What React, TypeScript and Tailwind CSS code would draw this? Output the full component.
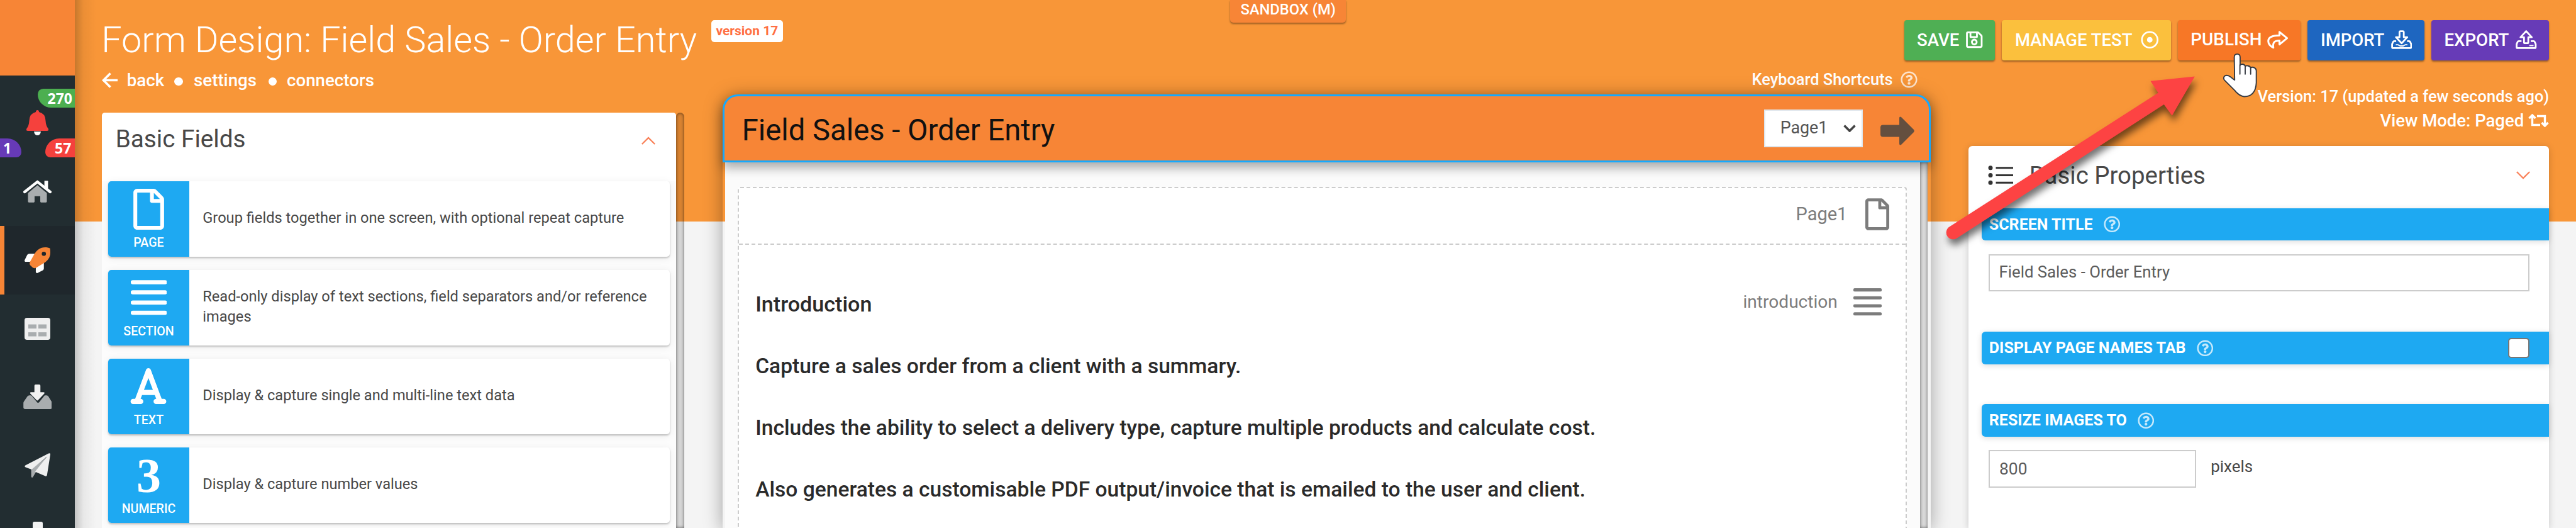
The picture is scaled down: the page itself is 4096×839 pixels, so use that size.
import type { ReactNode } from 'react';
import { FaRegDotCircle, FaRegFile, FaRegQuestionCircle, FaRegSave } from 'react-icons/fa';
import { FaFont } from 'react-icons/fa6';

function HomeIcon() {
  return (
    <svg viewBox="0 0 576 456" className="h-[36px] w-[45px]">
      <path fill="#a9adaf" d="M288 104 480 262V436q0 18-18 18H362q-16 0-16-18V326H230V436q0 18-16 18H114q-18 0-18-18V262Z" />
      <path fill="#fff" d="M430 14h62q12 0 12 12v170l-74-60Z" />
      <path d="M28 240 288 34 548 240" fill="none" stroke="#fff" strokeWidth="56" strokeLinecap="round" strokeLinejoin="round" />
    </svg>
  );
}

function RocketIcon() {
  return (
    <svg viewBox="0 0 512 512" className="h-[41px] w-[41px]">
      <path fill="#fff" d="M199 128H95c-16 0-36 12-43 26L3 253c-8 16 3 35 21 35h104l96 96v104c0 18 19 29 35 21l99-49c15-7 26-26 26-43V313Z" />
      <path fill="#f78536" d="M505 19C461 0 435 0 410 0 307 0 245 55 199 128l-88 156c-16 30-12 54 4 72l45 45c20 18 44 18 72 4l152-92C457 266 512 204 512 102c0-26 0-51-7-83Z" />
      <circle cx="384" cy="128" r="42" fill="#1f272c" />
    </svg>
  );
}

function TableIcon() {
  return (
    <svg viewBox="0 0 41 35" className="h-[35px] w-[41px]">
      <rect width="41" height="35" rx="4" fill="#efefef" />
      <path fill="#a9adaf" d="M6 10.500h13v6.500H6zM22 10.500h13v6.500H22zM6 23h13v6.500H6zM22 23h13v6.500H22z" />
    </svg>
  );
}

function InboxInIcon() {
  return (
    <svg viewBox="0 0 147 127" className="h-[39px] w-[45.600px]">
      <path fill="#a9adaf" d="M30 56h12l30 38h8l30-38h10q6 0 9 5l16 26q3 4 3 9v22q0 9-9 9H9q-9 0-9-9V96q0-5 3-9l18-26q4-5 9-5Z" />
      <path d="M57 6q0-6 6-6h19q6 0 6 6v34h16q8 0 4 7L76 81q-4 4-8 0L36 47q-4-7 4-7h17Z" fill="#f2f2f2" stroke="#222d31" strokeWidth="5" paintOrder="stroke" />
    </svg>
  );
}

function PlaneIcon() {
  return (
    <svg viewBox="0 0 133 127" className="h-[39px] w-[41.200px]">
      <path fill="#a9adaf" d="M34 82 112 24 55 103 42 125q-8 4-8-5Z" />
      <path fill="#efefef" d="M124 2q10-4 9 5L116 114q-2 8-9 5L54 96 116 18 36 85 5 73q-9-5 0-10Z" />
    </svg>
  );
}

function DeviceIcon() {
  return (
    <svg viewBox="0 0 16 40" className="h-[40px] w-[16px]">
      <path fill="#f2f2f2" d="M2.500 0h11Q16 0 16 3v37H0V3q0-3 2.500-3Z" />
    </svg>
  );
}

function SideItem({ children, active }: { children: ReactNode; active?: boolean }) {
  return (
    <div
      className={
        active
          ? 'flex h-[108.900px] shrink-0 items-center justify-center border-l-[7px] border-[#f78536] bg-[#1f272c] pr-[7px]'
          : 'flex h-[108.900px] shrink-0 items-center justify-center'
      }
    >
      {children}
    </div>
  );
}

function Sidebar() {
  return (
    <aside className="relative z-10 flex w-[119px] shrink-0 flex-col overflow-hidden bg-[#222d31]">
      <div className="h-[119.500px] shrink-0 bg-[#f78536]" />
      <div className="relative flex h-[130.300px] shrink-0 justify-center pt-[55px] font-['Open_Sans',sans-serif] text-[23px] leading-[30px] font-bold text-white">
        <svg viewBox="0 0 35 40" className="h-[40px] w-[35px]">
          <path fill="#fff" d="M12 34h11q-1 6-5.500 6T12 34Z" />
          <path fill="#f5413d" d="M17.500 0q2.500 0 2.500 3 10 2 10.500 14 .500 8 4 12 2 4-2 4h-30q-4 0-2-4 3.500-4 4-12Q5 5 15 3q0-3 2.500-3Z" />
        </svg>
        <span className="absolute top-[21px] right-0 h-[30px] w-[59.500px] rounded-tl-[10px] rounded-bl-[24px] bg-[#4caf50] pl-[16px]">270</span>
        <span className="absolute bottom-0 left-0 h-[30px] w-[34px] rounded-tr-[22px] rounded-br-[8px] bg-[#673ab7] pl-[5px]">1</span>
        <span className="absolute right-0 bottom-0 h-[30px] w-[47px] rounded-tl-[22px] rounded-bl-[8px] bg-[#f5413d] pl-[15px]">57</span>
      </div>
      <SideItem><HomeIcon /></SideItem>
      <SideItem active><RocketIcon /></SideItem>
      <SideItem><TableIcon /></SideItem>
      <SideItem><InboxInIcon /></SideItem>
      <SideItem><PlaneIcon /></SideItem>
      <SideItem><DeviceIcon /></SideItem>
    </aside>
  );
}

function SectionLines({ className }: { className: string }) {
  return (
    <svg viewBox="0 0 57.500 55.500" preserveAspectRatio="none" className={className}>
      <path d="M3 3.400h51.500M3 19.500h51.500M3 35.700h51.500M3 52h51.500" stroke="currentColor" strokeWidth="6.500" strokeLinecap="round" />
    </svg>
  );
}

function FieldRow({ label, icon, children }: { label: string; icon: ReactNode; children: ReactNode }) {
  return (
    <div className="flex h-[119.700px] shrink-0 overflow-hidden rounded-[5px] bg-white shadow-[0_2px_3px_rgba(0,0,0,0.220),0_2px_14px_rgba(0,0,0,0.070)]">
      <div className="flex w-[128.600px] shrink-0 flex-col items-center bg-[#1ea9f2] text-white">
        <div className="flex h-[88px] items-center justify-center">{icon}</div>
        <div className="text-[19.600px] leading-[20px] font-medium">{label}</div>
      </div>
      <div className="flex flex-1 items-center pr-[18px] pb-[3px] pl-[21.500px] text-[23.630px] leading-[32.600px] text-[#484848]">
        <div>{children}</div>
      </div>
    </div>
  );
}

function LeftColumn() {
  return (
    <section className="flex w-[926px] shrink-0 flex-col">
      <div className="flex h-[112px] shrink-0 pt-[16px]">
        <h1 className="-ml-px flex w-[969.600px] shrink-0 items-center text-[57.600px] leading-none font-light whitespace-nowrap text-white">
          Form Design: Field Sales - Order Entry
        </h1>
        <span className="mt-[16px] flex h-[34.500px] shrink-0 items-center rounded-[5px] bg-white px-[7.700px] text-[21px] leading-none font-bold whitespace-nowrap text-[#ff7043]">
          version 17
        </span>
      </div>
      <nav className="flex h-[31px] shrink-0 items-center text-[27.700px] leading-none font-medium text-white">
        <svg viewBox="0 0 25 25" className="mr-[14.500px] h-[25px] w-[25px]" fill="none" stroke="#fff" strokeWidth="3.600">
          <path d="M25 12.500H3M13.500 1.500 2.500 12.500l11 11" />
        </svg>
        <a>back</a>
        <i className="mt-[3px] mr-[17.500px] ml-[16px] h-[13px] w-[13.500px] rounded-full bg-white" />
        <a>settings</a>
        <i className="mt-[3px] mr-[16px] ml-[18.500px] h-[13px] w-[13.500px] rounded-full bg-white" />
        <a>connectors</a>
      </nav>
      <div className="mt-[36.200px] flex flex-1">
        <div className="flex w-[912.700px] flex-col rounded-t-[5px] bg-[#fcfcfc]">
          <div className="flex h-[109px] shrink-0 items-center justify-between rounded-t-[5px] bg-white pr-[32px] pb-[24px] pl-[21.500px]">
            <h2 className="text-[38.700px] leading-none text-[#484848]">Basic Fields</h2>
            <svg viewBox="0 0 24 14" className="mt-[4px] h-[13px] w-[24px]" fill="none" stroke="#f9825a" strokeWidth="2.400">
              <path d="m1 13 11-11 11 11" />
            </svg>
          </div>
          <div className="flex flex-col gap-[21.200px] px-[10px]">
            <FieldRow label="PAGE" icon={<FaRegFile className="h-[65px] w-[49px]" />}>
              Group fields together in one screen, with optional repeat capture
            </FieldRow>
            <FieldRow label="SECTION" icon={<SectionLines className="h-[55.500px] w-[57.500px]" />}>
              Read-only display of text sections, field separators and/or reference
              <br />
              images
            </FieldRow>
            <FieldRow label="TEXT" icon={<FaFont className="h-[65px] w-[58px]" />}>
              Display &amp; capture single and multi-line text data
            </FieldRow>
            <FieldRow label="NUMERIC" icon={<b className="pt-[2px] font-['Liberation_Serif',serif] text-[78px] leading-none">3</b>}>
              Display &amp; capture number values
            </FieldRow>
          </div>
        </div>
        <div className="w-[13.300px] rounded-t-[7px] bg-black/12 shadow-[inset_0_0_5px_rgba(0,0,0,0.600)]" />
      </div>
    </section>
  );
}

function CenterColumn() {
  return (
    <section className="flex w-[1921px] shrink-0 flex-col pt-[104px] text-[#222]">
      <div className="flex h-[45.800px] shrink-0 items-center justify-end gap-[12px] pr-[21px] text-[25.400px] leading-none font-medium text-white">
        <span>Keyboard Shortcuts</span>
        <FaRegQuestionCircle className="h-[27px] w-[27px] opacity-75" />
      </div>
      <div className="relative flex flex-1 flex-col rounded-t-[24px] shadow-[0_4px_30px_rgba(0,0,0,0.350)]">
        <header className="relative z-10 flex h-[108.700px] shrink-0 items-center rounded-t-[24px] border-[3.700px] border-[#14a9ff] bg-[#f78536] pr-[23px] pl-[28px] shadow-[0_8px_18px_rgba(0,0,0,0.350)]">
          <h2 className="flex-1 pt-[7px] text-[47.200px] leading-none text-[#111]">Field Sales - Order Entry</h2>
          <div className="mr-[27.500px] flex h-[59.500px] w-[157.500px] items-center justify-between border-2 border-[#dfe6ec] bg-white pr-[9px] pl-[24px]">
            <span className="pb-[2px] text-[26.800px] leading-none text-[#555]">Page1</span>
            <svg viewBox="0 0 20 12" className="h-[12px] w-[20px]" fill="none" stroke="#444" strokeWidth="3.600">
              <path d="m1.500 1.500 8.500 8.500 8.500-8.500" />
            </svg>
          </div>
          <svg viewBox="0 0 54 46" className="mt-[8px] h-[46px] w-[54px]" fill="#644f3f">
            <path d="M4 13.500h26V3q0-4 3.500-1.500L53 21q1.500 2 0 4L33.500 44.500Q30 47 30 43V32.500H4q-4 0-4-4v-11q0-4 4-4Z" />
          </svg>
        </header>
        <div className="flex flex-1 pr-[4.300px] pl-[4px]">
          <div className="flex flex-1 flex-col bg-[#fbfbfb] pt-[38.500px] pr-[21px] pl-[20.500px]">
            <div className="flex flex-1 flex-col rounded-t-[4px] border-x-2 border-t-2 border-dashed border-[#ccc] bg-white">
              <div className="flex h-[90px] shrink-0 items-center justify-end gap-[29px] border-b-2 border-dashed border-[#ccc] pr-[25.500px] pb-[5px] text-[#7c7c7c]">
                <span className="text-[29px] leading-none">Page1</span>
                <FaRegFile className="h-[51px] w-[38px]" />
              </div>
              <div className="flex justify-between pt-[46.500px] pr-[37.500px] pl-[26px]">
                <div className="text-[33.600px] leading-[97.900px] font-medium whitespace-nowrap text-[#2a2a2a]">
                  <p className="text-[34.100px]">Introduction</p>
                  <p>Capture a sales order from a client with a summary.</p>
                  <p>Includes the ability to select a delivery type, capture multiple products and calculate cost.</p>
                  <p>Also generates a customisable PDF output/invoice that is emailed to the user and client.</p>
                </div>
                <div className="flex h-[89px] items-center gap-[25.500px] text-[#7c7c7c]">
                  <span className="text-[28.100px] leading-none">introduction</span>
                  <SectionLines className="h-[43.500px] w-[45px]" />
                </div>
              </div>
            </div>
          </div>
          <div className="w-[12.500px] bg-[#d9d9d9] shadow-[inset_0_0_5px_rgba(0,0,0,0.550)]" />
        </div>
      </div>
    </section>
  );
}

function ActionButton({ label, className, icon }: { label: string; className: string; icon: ReactNode }) {
  return (
    <button
      className={`flex h-[64.200px] shrink-0 items-center justify-between rounded-[4px] pr-[19.700px] pb-[2px] pl-[20.500px] leading-none font-medium text-white shadow-[0_2px_3px_rgba(0,0,0,0.400)] ${className}`}
    >
      <span>{label}</span>
      {icon}
    </button>
  );
}

function PropertyBar({ label, children }: { label: string; children?: ReactNode }) {
  return (
    <div className="ml-[21.600px] flex h-[51.400px] shrink-0 items-center rounded-l-[6px] bg-[#1ea9f2] pl-[11.500px] text-white shadow-[0_2px_10px_rgba(0,0,0,0.150)]">
      <span className="text-[25.050px] leading-none font-bold">{label}</span>
      <FaRegQuestionCircle className="ml-[17px] h-[26.500px] w-[26.500px] opacity-75" />
      {children}
    </div>
  );
}

function RightColumn() {
  return (
    <section className="flex w-[923.500px] shrink-0 flex-col pt-[32.300px]">
      <div className="flex shrink-0 justify-end gap-[11px]">
        <ActionButton label="SAVE" className="w-[144.900px] bg-[#4faf54] text-[27.600px]" icon={<FaRegSave className="h-[30px] w-[26.500px]" />} />
        <ActionButton label="MANAGE TEST" className="w-[268.300px] bg-[#fbc03d] text-[27.500px]" icon={<FaRegDotCircle className="h-[28.500px] w-[28.500px]" />} />
        <ActionButton
          label="PUBLISH"
          className="w-[195.700px] bg-[#f77726] text-[27.900px]"
          icon={
            <svg viewBox="0 0 512 440" className="h-[28.600px] w-[33.300px]" fill="none" stroke="#fff" strokeWidth="46" strokeLinejoin="round">
              <path d="M300 28 486 180 300 332V238C180 238 128 280 150 412 78 376 26 320 26 250c0-102 110-138 274-140Z" />
            </svg>
          }
        />
        <ActionButton
          label="IMPORT"
          className="w-[185.600px] bg-[#1e66c0] text-[27.500px]"
          icon={
            <svg viewBox="0 0 108 97" className="h-[30px] w-[33.500px]" fill="none" stroke="#fff" strokeWidth="9" strokeLinejoin="round">
              <path d="M43 10q0-5 5-5h12q5 0 5 5v26h18L54 67 25 36h18Z" />
              <path d="M26 56H16q-4 0-6 4l-5 11v16q0 5 5 5h88q5 0 5-5V71l-5-11q-2-4-6-4H82" />
              <path d="M24 75h12l10 6h16l10-6h12" strokeWidth="6" />
            </svg>
          }
        />
        <ActionButton
          label="EXPORT"
          className="w-[187.200px] bg-[#673bb7] text-[27.600px]"
          icon={
            <svg viewBox="0 0 108 97" className="h-[30px] w-[33.500px]" fill="none" stroke="#fff" strokeWidth="9" strokeLinejoin="round">
              <path d="M43 62q0 5 5 5h12q5 0 5-5V36h18L54 5 25 36h18Z" />
              <path d="M30 56H16q-4 0-6 4l-5 11v16q0 5 5 5h88q5 0 5-5V71l-5-11q-2-4-6-4H78" />
              <path d="M70 79h22" strokeWidth="6" />
            </svg>
          }
        />
      </div>
      <div className="mt-[37.700px] flex h-[38.200px] shrink-0 items-center justify-end text-[25.400px] leading-none font-medium text-white">
        Version: 17 (updated a few seconds ago)
      </div>
      <div className="flex h-[38px] shrink-0 items-center justify-end gap-[7px] text-[27.500px] leading-none font-medium text-white">
        View Mode: Paged
        <svg viewBox="0 0 33 21" className="h-[21px] w-[33px]" fill="none" stroke="#fff" strokeWidth="3.400">
          <path d="M6.500 2v15.500H19M1.500 7 6.500 2l5 5M26.500 19V3.500H14M21.500 14l5 5 5-5" />
        </svg>
      </div>
      <div className="mt-[21.700px] flex flex-1 flex-col rounded-t-[6px] bg-white shadow-[0_2px_12px_rgba(0,0,0,0.180)]">
        <div className="flex h-[98.700px] shrink-0 items-center pr-[29px] pb-[5px] pl-[31px]">
          <svg viewBox="0 0 40 31" className="h-[31px] w-[40px]" fill="#333">
            <circle cx="4" cy="3.800" r="3.500" />
            <circle cx="4" cy="15.500" r="3.500" />
            <circle cx="4" cy="27.200" r="3.500" />
            <path d="M12.500 2.300H40v3H12.500zM12.500 14H40v3H12.500zM12.500 25.700H40v3H12.500z" />
          </svg>
          <h2 className="ml-[26px] flex-1 text-[38.400px] leading-none text-[#484848]">Basic Properties</h2>
          <svg viewBox="0 0 24 14" className="h-[13px] w-[24px]" fill="none" stroke="#f9825a" strokeWidth="2.400">
            <path d="m1 1 11 11L23 1" />
          </svg>
        </div>
        <PropertyBar label="SCREEN TITLE" />
        <div className="mt-[21.500px] ml-[32.800px] flex h-[59px] w-[859.500px] shrink-0 items-center border-2 border-[#ccc] bg-white pl-[14px] text-[25.750px] leading-none text-[#5c5c5c]">
          Field Sales - Order Entry
        </div>
        <div className="mt-[64.500px]" />
        <PropertyBar label="DISPLAY PAGE NAMES TAB">
          <span className="mr-[31.700px] ml-auto h-[32px] w-[33.500px] rounded-[5px] border-2 border-[#767676] bg-white" />
        </PropertyBar>
        <div className="mt-[63.800px]" />
        <PropertyBar label="RESIZE IMAGES TO" />
        <div className="mt-[21.300px] flex h-[60px] shrink-0 items-center pl-[32.800px]">
          <div className="flex h-full w-[330px] items-center border-2 border-[#ccc] bg-white pl-[14.500px] text-[26.400px] leading-none text-[#5c5c5c]">800</div>
          <span className="ml-[22.800px] pb-[6px] text-[25.900px] leading-none text-[#484848]">pixels</span>
        </div>
      </div>
    </section>
  );
}

export default function App() {
  return (
    <div className="relative flex h-[839px] w-[4096px] overflow-hidden bg-[linear-gradient(#f89638_352px,#f4f4f4_352px)] font-['Roboto',sans-serif]">
      <Sidebar />
      <div className="pointer-events-none absolute inset-y-0 left-[119px] w-[34px] bg-[linear-gradient(90deg,rgba(0,0,0,0.200),rgba(0,0,0,0.050)_40%,transparent)]" />
      <main className="flex flex-1 pl-[43.200px]">
        <LeftColumn />
        <div className="w-[60.500px] shrink-0" />
        <CenterColumn />
        <div className="w-[60px] shrink-0" />
        <RightColumn />
      </main>
      <div className="absolute top-0 left-[1956px] flex h-[36px] w-[184.400px] items-center justify-center rounded-b-[5px] bg-[#f78536] pb-[5px] text-[23.700px] leading-none font-medium text-white shadow-[0_2px_3px_rgba(0,0,0,0.400)]">
        SANDBOX (M)
      </div>
      <svg viewBox="0 0 440 320" className="absolute top-[100px] left-[3080px] h-[320px] w-[440px] drop-shadow-[3px_9px_6px_rgba(0,0,0,0.550)]">
        <path fill="#fd4343" d="M19.500 260.500 351.700 47.400 339.500 28.800 409.800 21.600 373.700 83.700 360.800 66 31.500 278.500A10.700 10.700 0 0 1 19.500 260.500Z" />
      </svg>
      <svg viewBox="-3 -3 176 230" className="absolute top-[84px] left-[3534px] h-[71.400px] w-[54.600px]" stroke="#333840" strokeWidth="6" strokeLinejoin="round" strokeLinecap="round">
        <path
          fill="#fff"
          d="M57 20Q57 3 72 3T87 20V60Q90 54 100 55 112 57 113 66 118 61 127 63 139 65 141 74 146 69 155 71 170 75 170 90V150Q166 221 108 221 82 218 60 190L6 136Q-2 122 10 114 22 108 38 120L59 136Z"
        />
        <path fill="none" d="M86 58V106M113 66V106M141 74V106" />
      </svg>
    </div>
  );
}
